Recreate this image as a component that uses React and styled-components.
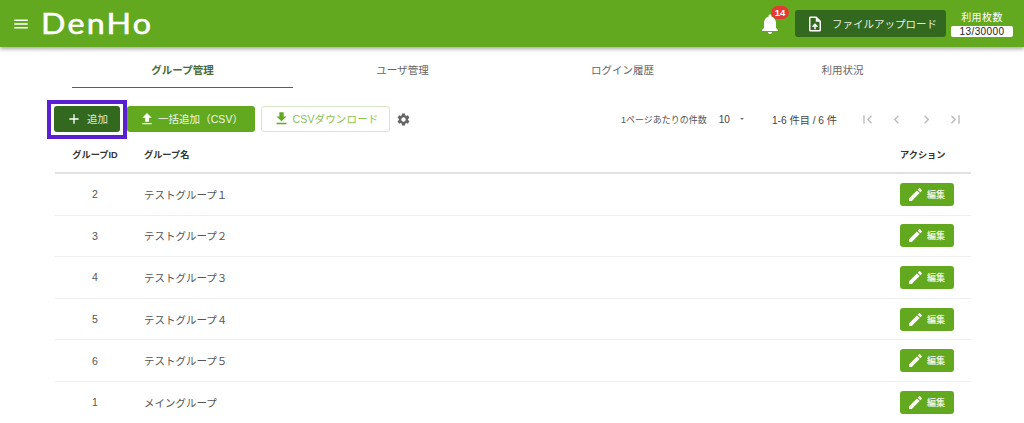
import React from 'react';
import styled, { createGlobalStyle } from 'styled-components';
import {
  MdMenu, MdNotifications, MdOutlineUploadFile, MdFileUpload, MdFileDownload,
  MdSettings, MdEdit, MdAdd, MdFirstPage, MdLastPage, MdChevronLeft, MdChevronRight,
} from 'react-icons/md';

const GREEN = '#63a91f';
const DARK_GREEN = '#33691e';
const FONT = '"Liberation Sans", "Noto Sans CJK JP", sans-serif';

const GlobalStyle = createGlobalStyle`
  html, body {
    margin: 0;
    height: 423px;
    overflow: hidden;
    background: #fff;
    font-family: ${FONT};
  }
`;

const Header = styled.header`
  height: 47px;
  background: ${GREEN};
  box-shadow: 0 2px 4px rgba(0, 0, 0, 0.35);
  display: flex;
  align-items: center;
  padding: 0 11px 0 12px;
  color: #fff;
`;

const MenuIcon = styled(MdMenu)`
  width: 18px;
  height: 18px;
  margin-right: 11px;
`;

const LogoSlot = styled.div`
  flex: 1;
  margin-bottom: 2px;
`;

const Logo = styled.div`
  display: inline-block;
  font-family: "Lato", sans-serif;
  font-size: 28px;
  font-weight: 400;
  letter-spacing: 1.9px;
  -webkit-text-stroke: 0.5px #fff;
  transform: scaleX(1.15);
  transform-origin: left center;
`;

const Bell = styled.div`
  position: relative;
  width: 20px;
  height: 24px;
  margin-right: 15px;
  margin-top: 1px;
  display: flex;
  align-items: center;
  justify-content: center;

  svg {
    width: 24px;
    height: 24px;
    flex: none;
  }
`;

const Badge = styled.span`
  position: absolute;
  top: -6px;
  left: 11px;
  width: 18px;
  height: 13px;
  border-radius: 7px;
  background: #e53935;
  font-size: 9.5px;
  font-weight: 700;
  line-height: 13px;
  text-align: center;
`;

const UploadButton = styled.div`
  width: 151px;
  height: 27px;
  margin-right: 5px;
  background: ${DARK_GREEN};
  border-radius: 3px;
  display: flex;
  align-items: center;
  padding-left: 11px;
  box-sizing: border-box;
  font-size: 10.5px;
  white-space: nowrap;
  color: #e6eee0;

  svg {
    width: 18px;
    height: 18px;
    margin-right: 8px;
    color: #fff;
    flex: none;
  }
`;

const Usage = styled.div`
  width: 62px;
  display: flex;
  flex-direction: column;
  align-items: center;
  font-size: 10px;
  letter-spacing: 0.4px;
  line-height: 13px;
  margin-top: 1px;
`;

const UsageCount = styled.div`
  width: 100%;
  height: 11px;
  margin-top: 2px;
  background: #fff;
  border-radius: 2px;
  color: #222;
  font-size: 10px;
  line-height: 11px;
  text-align: center;
`;

const Tabs = styled.nav`
  display: flex;
  padding-left: 72px;
  height: 41px;
`;

const Tab = styled.div`
  width: 221px;
  margin-right: -1px;
  box-sizing: border-box;
  font-size: 10.5px;
  line-height: 46px;
  text-align: center;
  color: ${(p) => (p.$active ? '#4a6b35' : '#666')};
  font-weight: ${(p) => (p.$active ? 700 : 400)};
  border-bottom: ${(p) => (p.$active ? '1.5px solid #44722e' : 'none')};
  height: 41px;
`;

const Toolbar = styled.div`
  display: flex;
  align-items: center;
  height: 26px;
  margin-top: 18px;
  padding-left: 47px;
`;

const Button = styled.div`
  height: 26px;
  box-sizing: border-box;
  border-radius: 3px;
  display: flex;
  align-items: center;
  justify-content: center;
  font-size: 10.5px;
  padding-bottom: 1px;

  svg {
    flex: none;
  }
`;

const HighlightFrame = styled.div`
  margin: -6px 0 -7px;
  padding: 2px 3px 3px;
  border: 4px solid #5a1fd1;
`;

const AddButton = styled(Button)`
  width: 66px;
  background: ${DARK_GREEN};
  color: #dfe8d8;

  svg {
    width: 16px;
    height: 16px;
    margin-right: 5px;
    color: #fff;
  }
`;

const BulkButton = styled(Button)`
  width: 128px;
  background: ${GREEN};
  color: #f0f6e8;
  margin-right: 6px;
  letter-spacing: 0.05px;

  svg {
    width: 16px;
    height: 16px;
    margin-right: 3px;
    color: #fff;
  }
`;

const CsvButton = styled(Button)`
  width: 129px;
  background: #fff;
  border: 1px solid #d8e8c8;
  color: #8cc04f;
  letter-spacing: 0.15px;

  svg {
    width: 17px;
    height: 17px;
    margin-right: 3px;
    color: ${GREEN};
  }
`;

const Gear = styled(MdSettings)`
  width: 15px;
  height: 15px;
  margin-left: 6px;
  color: #666;
`;

const Pager = styled.div`
  margin-left: auto;
  display: flex;
  align-items: center;
  color: #555;
  padding-right: 60px;
`;

const PerPageLabel = styled.span`
  font-size: 9px;
  margin-right: 12px;
`;

const PerPageValue = styled.span`
  font-size: 10px;
  color: #444;
  margin-right: 10px;
`;

const Caret = styled.span`
  width: 0;
  height: 0;
  border-left: 2px solid transparent;
  border-right: 2px solid transparent;
  border-top: 2px solid #777;
  margin-right: 28px;
`;

const RangeLabel = styled.span`
  font-size: 10.2px;
  color: #444;
  margin-right: 22px;
`;

const PagerIcons = styled.div`
  display: flex;
  width: 105px;
  justify-content: space-between;
  color: #bdbdbd;

  svg {
    width: 17px;
    height: 17px;
  }
`;

const Table = styled.div`
  margin: 3px 53px 0 55px;
`;

const Row = styled.div`
  display: grid;
  grid-template-columns: 80px 1fr 71px;
  align-items: center;
  height: 41.6px;
  box-sizing: border-box;
  border-bottom: 1px solid #eeeeee;
  font-size: 10.5px;
  color: #555;
`;

const HeadRow = styled(Row)`
  height: 39px;
  border-bottom: 2px solid #e0e0e0;
  font-size: 9.2px;
  font-weight: 700;
  color: #333;
`;

const IdCell = styled.div`
  text-align: center;
`;

const NameCell = styled.div`
  padding-left: 9px;
`;

const EditButton = styled.div`
  width: 54px;
  height: 23px;
  background: ${GREEN};
  border-radius: 3px;
  color: #e8f2dc;
  font-size: 9px;
  font-weight: 700;
  display: flex;
  align-items: center;
  padding-left: 7px;
  box-sizing: border-box;

  svg {
    width: 17px;
    height: 17px;
    margin-right: 3px;
    color: #fff;
    flex: none;
  }
`;

const rows = [
  { id: 2, name: 'テストグループ１' },
  { id: 3, name: 'テストグループ２' },
  { id: 4, name: 'テストグループ３' },
  { id: 5, name: 'テストグループ４' },
  { id: 6, name: 'テストグループ５' },
  { id: 1, name: 'メイングループ' },
];

const App = () => (
  <>
    <GlobalStyle />
    <Header>
      <MenuIcon />
      <LogoSlot><Logo>DenHo</Logo></LogoSlot>
      <Bell>
        <MdNotifications />
        <Badge>14</Badge>
      </Bell>
      <UploadButton>
        <MdOutlineUploadFile />
        ファイルアップロード
      </UploadButton>
      <Usage>
        利用枚数
        <UsageCount>13/30000</UsageCount>
      </Usage>
    </Header>
    <Tabs>
      <Tab $active>グループ管理</Tab>
      <Tab>ユーザ管理</Tab>
      <Tab>ログイン履歴</Tab>
      <Tab>利用状況</Tab>
    </Tabs>
    <Toolbar>
      <HighlightFrame>
        <AddButton><MdAdd />追加</AddButton>
      </HighlightFrame>
      <BulkButton><MdFileUpload />一括追加（CSV）</BulkButton>
      <CsvButton><MdFileDownload />CSVダウンロード</CsvButton>
      <Gear />
      <Pager>
        <PerPageLabel>1ページあたりの件数</PerPageLabel>
        <PerPageValue>10</PerPageValue>
        <Caret />
        <RangeLabel>1-6 件目 / 6 件</RangeLabel>
        <PagerIcons>
          <MdFirstPage />
          <MdChevronLeft />
          <MdChevronRight />
          <MdLastPage />
        </PagerIcons>
      </Pager>
    </Toolbar>
    <Table>
      <HeadRow>
        <IdCell>グループID</IdCell>
        <NameCell>グループ名</NameCell>
        <div>アクション</div>
      </HeadRow>
      {rows.map((row) => (
        <Row key={row.id}>
          <IdCell>{row.id}</IdCell>
          <NameCell>{row.name}</NameCell>
          <EditButton><MdEdit />編集</EditButton>
        </Row>
      ))}
    </Table>
  </>
);

export default App;
